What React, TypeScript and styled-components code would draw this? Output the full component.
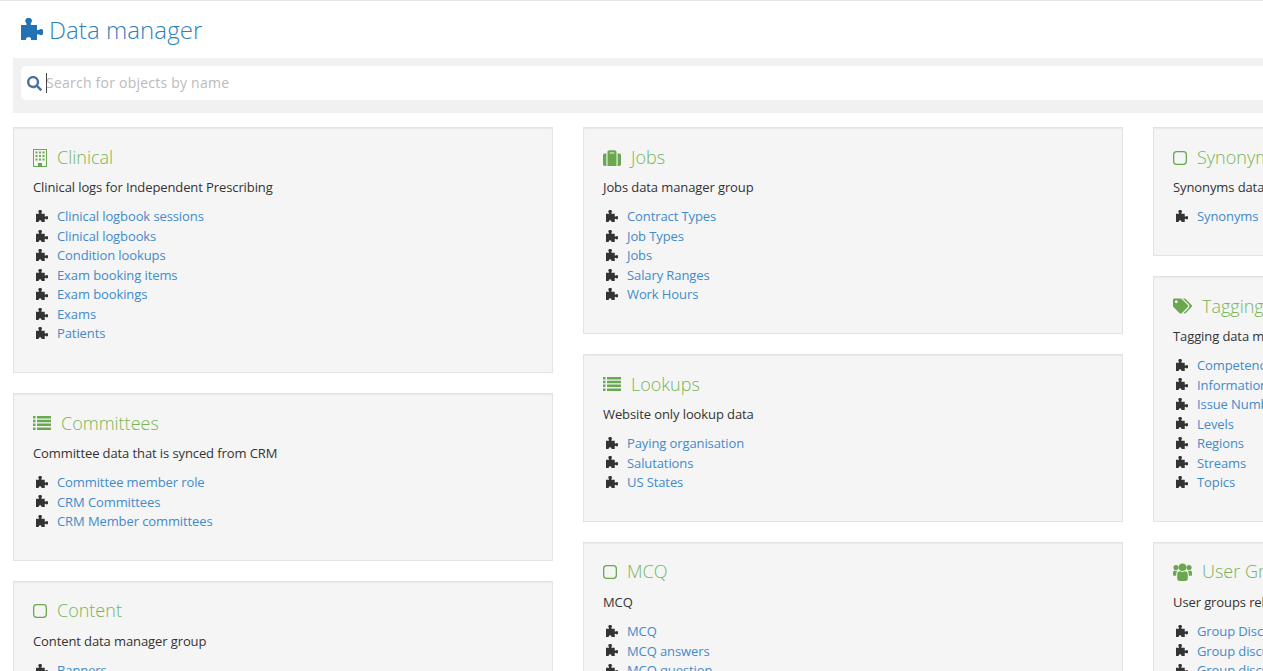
import React from 'react';
import styled, { createGlobalStyle } from 'styled-components';
import { FaSearch, FaSuitcase, FaTags } from 'react-icons/fa';

interface Group {
  title: string;
  description: string;
  icon: React.ReactNode;
  iconWidth: number;
  items: string[];
}

const GlobalStyle = createGlobalStyle`
  html, body {
    margin: 0;
    padding: 0;
    height: 671px;
    overflow: hidden;
    background: #fff;
    font-family: "Open Sans", "Liberation Sans", sans-serif;
    font-size: 13px;
    line-height: 19.5px;
    letter-spacing: -0.1px;
    color: #333;
  }
`;

const Page = styled.div`
  width: 1693px;
  border-top: 1px solid #e5e5e5;
  padding: 0 0 0 13px;
  box-sizing: border-box;
`;

const PageTitle = styled.h1`
  display: flex;
  align-items: center;
  gap: 6px;
  margin: 0;
  padding: 0 0 0 8px;
  height: 57px;
  box-sizing: border-box;
  font-size: 24px;
  font-weight: 300;
  line-height: 36px;
  letter-spacing: 0.08px;
  color: #2f7fbd;

  svg {
    width: 22px;
    height: 22px;
    color: #2272b4;
    margin-top: -2px;
  }
`;

const SearchWell = styled.div`
  background: #f1f1f1;
  padding: 8px;
  height: 55px;
  box-sizing: border-box;
  margin-bottom: 14px;
`;

const SearchBox = styled.div`
  position: relative;
  display: flex;
  align-items: center;
  height: 34px;
  background: #fff;
  border-radius: 5px;
  padding-left: 6px;

  svg {
    width: 15px;
    height: 15px;
    color: #4d7299;
    flex: none;
  }
`;

const SearchInput = styled.input`
  flex: 1;
  border: 0;
  outline: 0;
  padding: 0 0 2px 4px;
  background: transparent;
  font-family: inherit;
  font-size: 14px;
  letter-spacing: 0.23px;
  color: #333;

  &::placeholder {
    color: #bbb;
    opacity: 1;
  }
`;

const Caret = styled.span`
  position: absolute;
  left: 25px;
  top: 7px;
  width: 1px;
  height: 20px;
  background: #444;
`;

const Columns = styled.div`
  display: grid;
  grid-template-columns: repeat(3, 540px);
  column-gap: 30px;
`;

const Column = styled.div`
  display: flex;
  flex-direction: column;
  gap: 20px;
`;

const Card = styled.section`
  background: #f5f5f5;
  border: 1px solid #e3e3e3;
  box-shadow: inset 0 1px 1px rgba(0, 0, 0, 0.05);
  padding: 19.8px 19px 27.85px;
`;

const CardTitle = styled.h3`
  display: flex;
  align-items: center;
  gap: 10px;
  margin: 0 0 10.6px;
  font-size: 18px;
  font-weight: 300;
  line-height: 19.8px;
  letter-spacing: 0;
  color: #76b658;
  white-space: nowrap;
`;

const TitleIcon = styled.span<{ $width: number }>`
  display: inline-flex;
  align-items: center;
  justify-content: center;
  width: ${(p) => p.$width}px;
  height: 19.8px;
  color: #6aa84f;

  svg {
    width: ${(p) => p.$width}px;
    height: 18px;
  }
`;

const Description = styled.p`
  margin: 0 0 9.75px;
  white-space: nowrap;
`;

const ItemList = styled.ul`
  list-style: none;
  margin: 0;
  padding: 0;
`;

const Item = styled.li`
  display: flex;
  align-items: center;
  height: 19.5px;
  white-space: nowrap;

  svg {
    width: 12px;
    height: 12px;
    color: #333;
    margin: -2px 9px 0 3px;
    flex: none;
  }
`;

const ItemLink = styled.a`
  color: #428bca;
  text-decoration: none;
`;

const PuzzleIcon = () => (
  <svg viewBox="0 0 22 22" fill="currentColor">
    <path d="M0 7H5C5.5 7 6 6.5 5.2 5A3.2 3.2 0 1 1 10 5C9.4 6.5 10 7 10.5 7H16V11.5C16 12 16.5 12.5 18 11.8A3 3 0 1 1 18 16.5C16.5 15.8 16 16.2 16 17V22H10.5C10 22 9.7 21.5 10.2 20.5A2.9 2.9 0 0 0 5 20.5C5.5 21.5 5 22 4.5 22H0Z" />
  </svg>
);

const BuildingIcon = () => (
  <svg viewBox="0 0 14 18" fill="currentColor">
    <path
      fillRule="evenodd"
      d="M0 0H14V18H0ZM1 1V17H5V14H9V17H13V1Z"
    />
    <path d="M2.5 2.5h2v2h-2zM6 2.5h2v2H6zM9.5 2.5h2v2h-2zM2.5 6h2v2h-2zM6 6h2v2H6zM9.5 6h2v2h-2zM2.5 9.5h2v2h-2zM6 9.5h2v2H6zM9.5 9.5h2v2h-2z" />
  </svg>
);

const ListIcon = () => (
  <svg viewBox="0 0 18 14" fill="currentColor">
    <path d="M0 0h2.5v2.5H0zM0 3.8h2.5v2.5H0zM0 7.6h2.5v2.5H0zM0 11.4h2.5v2.5H0zM4 0h14v2.5H4zM4 3.8h14v2.5H4zM4 7.6h14v2.5H4zM4 11.4h14v2.5H4z" />
  </svg>
);

const SquareIcon = () => (
  <svg viewBox="0 0 14 14" fill="none" stroke="currentColor" strokeWidth="1.3">
    <rect x="0.65" y="0.65" width="12.7" height="12.7" rx="3" />
  </svg>
);

const UsersIcon = () => (
  <svg viewBox="0 0 19 18" fill="currentColor">
    <circle cx="9.5" cy="4.2" r="3.8" />
    <circle cx="3" cy="4.6" r="2.6" />
    <circle cx="16" cy="4.6" r="2.6" />
    <path d="M4.2 11.5C4.2 9.2 5.6 8.2 7 8.2C8.2 9.2 10.8 9.2 12 8.2C13.4 8.2 14.8 9.2 14.8 11.5V15.2C14.8 17 13.8 18 12.4 18H6.6C5.2 18 4.2 17 4.2 15.2Z" />
    <path d="M0 10C0 8.4 .8 7.6 1.8 7.6C2.6 8.2 3.6 8.3 4.4 8.1C3.9 8.8 3.2 9.8 3.1 12.8H1.2C.4 12.8 0 12.2 0 11.4Z" />
    <path d="M19 10C19 8.4 18.2 7.6 17.2 7.6C16.4 8.2 15.4 8.3 14.6 8.1C15.1 8.8 15.8 9.8 15.9 12.8H17.8C18.6 12.8 19 12.2 19 11.4Z" />
  </svg>
);

const columns: Group[][] = [
  [
    {
      title: 'Clinical',
      description: 'Clinical logs for Independent Prescribing',
      icon: <BuildingIcon />,
      iconWidth: 14,
      items: [
        'Clinical logbook sessions',
        'Clinical logbooks',
        'Condition lookups',
        'Exam booking items',
        'Exam bookings',
        'Exams',
        'Patients',
      ],
    },
    {
      title: 'Committees',
      description: 'Committee data that is synced from CRM',
      icon: <ListIcon />,
      iconWidth: 18,
      items: ['Committee member role', 'CRM Committees', 'CRM Member committees'],
    },
    {
      title: 'Content',
      description: 'Content data manager group',
      icon: <SquareIcon />,
      iconWidth: 14,
      items: ['Banners', 'Documents', 'Pages'],
    },
  ],
  [
    {
      title: 'Jobs',
      description: 'Jobs data manager group',
      icon: <FaSuitcase />,
      iconWidth: 18,
      items: ['Contract Types', 'Job Types', 'Jobs', 'Salary Ranges', 'Work Hours'],
    },
    {
      title: 'Lookups',
      description: 'Website only lookup data',
      icon: <ListIcon />,
      iconWidth: 18,
      items: ['Paying organisation', 'Salutations', 'US States'],
    },
    {
      title: 'MCQ',
      description: 'MCQ',
      icon: <SquareIcon />,
      iconWidth: 14,
      items: ['MCQ', 'MCQ answers', 'MCQ question'],
    },
  ],
  [
    {
      title: 'Synonyms',
      description: 'Synonyms data manager group',
      icon: <SquareIcon />,
      iconWidth: 14,
      items: ['Synonyms'],
    },
    {
      title: 'Tagging',
      description: 'Tagging data manager group',
      icon: <FaTags />,
      iconWidth: 19,
      items: [
        'Competencies',
        'Information types',
        'Issue Numbers',
        'Levels',
        'Regions',
        'Streams',
        'Topics',
      ],
    },
    {
      title: 'User Groups',
      description: 'User groups related data',
      icon: <UsersIcon />,
      iconWidth: 19,
      items: ['Group Discussions', 'Group discussion posts', 'Group discussion topics'],
    },
  ],
];

const App: React.FC = () => (
  <>
    <GlobalStyle />
    <Page>
      <PageTitle>
        <PuzzleIcon />
        Data manager
      </PageTitle>
      <SearchWell>
        <SearchBox>
          <FaSearch />
          <SearchInput placeholder="Search for objects by name" readOnly />
          <Caret />
        </SearchBox>
      </SearchWell>
      <Columns>
        {columns.map((groups, i) => (
          <Column key={i}>
            {groups.map((group) => (
              <Card key={group.title}>
                <CardTitle>
                  <TitleIcon $width={group.iconWidth}>{group.icon}</TitleIcon>
                  {group.title}
                </CardTitle>
                <Description>{group.description}</Description>
                <ItemList>
                  {group.items.map((item) => (
                    <Item key={item}>
                      <PuzzleIcon />
                      <ItemLink href="#">{item}</ItemLink>
                    </Item>
                  ))}
                </ItemList>
              </Card>
            ))}
          </Column>
        ))}
      </Columns>
    </Page>
  </>
);

export default App;
